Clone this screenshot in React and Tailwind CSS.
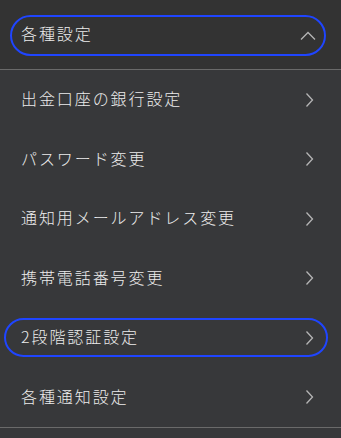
import React from "react";

const items = [
  { label: "出金口座の銀行設定" },
  { label: "パスワード変更" },
  { label: "通知用メールアドレス変更" },
  { label: "携帯電話番号変更" },
  { label: "2段階認証設定", focused: true },
  { label: "各種通知設定" },
];

function ChevronRight() {
  return (
    <svg width="9" height="16" viewBox="0 0 9 16" fill="none" className="shrink-0">
      <path d="M1.5 1.5 L7.5 8 L1.5 14.5" stroke="#b5b5b5" strokeWidth="1.3" />
    </svg>
  );
}

function ChevronUp() {
  return (
    <svg width="16" height="10" viewBox="0 0 16 10" fill="none" className="shrink-0">
      <path d="M1 8.5 L8 1.5 L15 8.5" stroke="#b5b5b5" strokeWidth="1.3" />
    </svg>
  );
}

export default function App() {
  const font = { fontFamily: '"Noto Sans CJK JP", "Noto Sans", sans-serif' };
  const label = "text-[16px] tracking-[0.12em] leading-none font-light mb-[3px]";
  return (
    <div className="w-[341px] h-[438px] bg-[#37383a] text-[#ececec] overflow-hidden" style={font}>
      {/* header */}
      <div className="h-[69px] bg-[#333333] pt-[15px] pl-[10px] pr-[15px]">
        <div className="h-[41px] rounded-full border-2 border-[#1f45ff] flex items-center pl-[9px] pr-[8px] justify-between">
          <span className={label + " mb-[5px]"}>各種設定</span>
          <ChevronUp />
        </div>
      </div>
      <div className="h-px bg-[#6a6a6a]" />

      <ul>
        {items.map((it) => (
          <li key={it.label} className="h-[59.5px] flex items-center">
            {it.focused ? (
              <div className="ml-[4px] mr-[13px] flex-1 h-[39px] rounded-full border-2 border-[#1f45ff] flex items-center justify-between pl-[15px] pr-[12px]">
                <span className={label}>{it.label}</span>
                <ChevronRight />
              </div>
            ) : (
              <div className="flex-1 flex items-center justify-between pl-[21px] pr-[27px]">
                <span className={label}>{it.label}</span>
                <ChevronRight />
              </div>
            )}
          </li>
        ))}
      </ul>
      <div className="h-px bg-[#6a6a6a]" />
    </div>
  );
}
